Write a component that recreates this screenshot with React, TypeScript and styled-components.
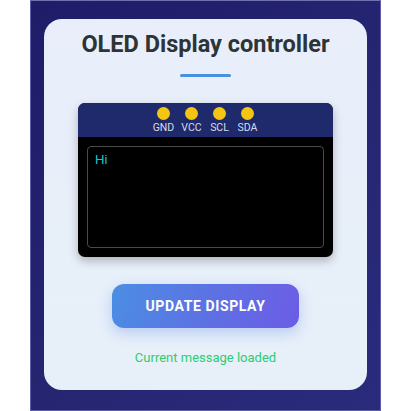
import React from "react";
import styled, { createGlobalStyle } from "styled-components";

const Global = createGlobalStyle`
  html, body { margin: 0; padding: 0; background: #ffffff; }
  body { font-family: Roboto, "Liberation Sans", sans-serif; }
`;

const Stage = styled.div`
  box-sizing: border-box;
  width: 351px;
  height: 411px;
  margin: 0 auto;
  padding: 18px 13px 21px;
  background: linear-gradient(135deg, #1f1c68 0%, #262673 60%, #2b2b7d 100%);
  border: 1px solid #5e5ea8;
  border-top-color: #7070b0;
`;

const Card = styled.div`
  box-sizing: border-box;
  height: 371px;
  border-radius: 18px;
  background: linear-gradient(180deg, #e9eefa 0%, #e7f0f9 100%);
  display: flex;
  flex-direction: column;
  align-items: center;
  padding: 10px 30px 0;
`;

const Title = styled.h1`
  margin: 0;
  font-family: Roboto, "Liberation Sans", sans-serif;
  font-weight: 700;
  font-size: 23.5px;
  line-height: 30px;
  color: #2d3436;
  white-space: nowrap;
`;

const Rule = styled.div`
  width: 51px;
  height: 3px;
  border-radius: 2px;
  background: #4a90e2;
  margin-top: 15px;
`;

const Module = styled.div`
  margin-top: 26px;
  width: 255px;
  border-radius: 7px;
  overflow: hidden;
  background: #000;
  box-shadow: 0 4px 10px rgba(0, 0, 0, 0.25);
  display: flex;
  flex-direction: column;
`;

const PinBar = styled.div`
  height: 34px;
  background: #1e2a6b;
  display: flex;
  justify-content: center;
  gap: 5px;
  padding-top: 4px;
  box-sizing: border-box;
`;

const Pin = styled.div`
  width: 23px;
  display: flex;
  flex-direction: column;
  align-items: center;
`;

const Dot = styled.div`
  width: 13px;
  height: 13px;
  border-radius: 50%;
  background: #f4c514;
`;

const PinLabel = styled.span`
  margin-top: 2px;
  font-family: Roboto, "Liberation Sans", sans-serif;
  font-size: 10.5px;
  line-height: 11px;
  color: #d8dbe8;
`;

const ScreenWrap = styled.div`
  padding: 9px 9px 9px;
`;

const Screen = styled.div`
  box-sizing: border-box;
  height: 102px;
  border: 1.5px solid #4a4a4a;
  border-radius: 4px;
  padding: 5px 7px;
  font-family: "Liberation Sans", Arial, sans-serif;
  font-size: 13px;
  color: #12c8d4;
`;

const Button = styled.button`
  margin-top: 27px;
  width: 187px;
  height: 44px;
  border: none;
  border-radius: 12px;
  background: linear-gradient(110deg, #4a8fe3 0%, #5d72e3 50%, #6c5ce6 100%);
  box-shadow: 0 5px 14px rgba(74, 120, 226, 0.3);
  color: #ffffff;
  font-family: Roboto, "Liberation Sans", sans-serif;
  font-weight: 700;
  font-size: 14px;
  letter-spacing: 0.6px;
`;

const Status = styled.div`
  margin-top: 22px;
  font-family: Roboto, "Liberation Sans", sans-serif;
  font-size: 13px;
  color: #2ecc71;
`;

const pins = ["GND", "VCC", "SCL", "SDA"];

export default function App() {
  return (
    <>
      <Global />
      <Stage>
        <Card>
          <Title>OLED Display controller</Title>
          <Rule />
          <Module>
            <PinBar>
              {pins.map((p) => (
                <Pin key={p}>
                  <Dot />
                  <PinLabel>{p}</PinLabel>
                </Pin>
              ))}
            </PinBar>
            <ScreenWrap>
              <Screen>Hi</Screen>
            </ScreenWrap>
          </Module>
          <Button>UPDATE DISPLAY</Button>
          <Status>Current message loaded</Status>
        </Card>
      </Stage>
    </>
  );
}
